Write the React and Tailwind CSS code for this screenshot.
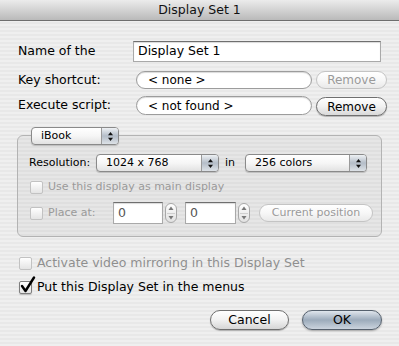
import React from 'react'

const stripes =
  'bg-[repeating-linear-gradient(180deg,#efefef_0px,#efefef_2px,#e8e8e8_2px,#e8e8e8_4px)]'

function Arrows() {
  return (
    <svg width="7" height="11" viewBox="0 0 7 11">
      <path d="M3.5 1 L6 4.2 L1 4.2 Z" fill="#111" />
      <path d="M3.5 10 L6 6.8 L1 6.8 Z" fill="#111" />
    </svg>
  )
}

function Popup({ label, className }) {
  return (
    <div
      className={`flex h-[18px] items-stretch overflow-hidden rounded-[4px] border border-[#8a8a8a] bg-linear-to-b from-white via-[#f6f6f6] to-[#e2e2e2] shadow-[0_1px_1px_rgba(0,0,0,0.18)] ${className}`}
    >
      <div className="flex flex-1 items-center pl-[9px] text-[11px] text-black">{label}</div>
      <div className="flex w-[17px] items-center justify-center border-l border-[#9a9a9a] bg-linear-to-b from-[#eef1f4] via-[#b4bdc8] to-[#dde2e7]">
        <Arrows />
      </div>
    </div>
  )
}

function Stepper() {
  return (
    <div className="flex h-[20px] w-[12px] flex-col items-center justify-between rounded-[6px] border border-[#a8a8a8] bg-linear-to-b from-white via-[#eeeeee] to-[#e2e2e2] py-[2px]">
      <svg width="6" height="5" viewBox="0 0 6 5">
        <path d="M3 0.5 L5.5 4 L0.5 4 Z" fill="#777" />
      </svg>
      <div className="h-px w-[8px] bg-[#cfcfcf]" />
      <svg width="6" height="5" viewBox="0 0 6 5">
        <path d="M3 4.5 L5.5 1 L0.5 1 Z" fill="#777" />
      </svg>
    </div>
  )
}

function Checkbox({ checked, disabled }) {
  return (
    <div className="relative h-[13px] w-[13px] shrink-0">
      <div
        className={`h-[13px] w-[13px] rounded-[2px] border bg-linear-to-b from-white to-[#e4e4e4] ${
          disabled ? 'border-[#c2c2c2]' : 'border-[#7e7e7e] shadow-[0_1px_1px_rgba(0,0,0,0.2)]'
        }`}
      />
      {checked && (
        <svg className="absolute -top-[5px] left-[1px]" width="16" height="18" viewBox="0 0 16 18">
          <path d="M2 10 L5.5 15 L14 1.5" fill="none" stroke="#000" strokeWidth="2.4" strokeLinecap="round" strokeLinejoin="round" />
        </svg>
      )}
    </div>
  )
}

function TextField({ value, className }) {
  return (
    <div
      className={`flex items-center border border-[#a9a9a9] border-t-[#6f6f6f] bg-white pl-[4px] shadow-[inset_0_1px_1px_rgba(0,0,0,0.15)] ${className}`}
    >
      {value}
    </div>
  )
}

export default function App() {
  return (
    <div
      className={`flex h-[346px] w-[399px] flex-col overflow-hidden font-['DejaVu_Sans',sans-serif] text-[12.5px] text-black ${stripes}`}
    >
      {/* Title bar */}
      <div className="flex h-[21px] shrink-0 items-center justify-center border-b border-[#6e6e6e] bg-linear-to-b from-[#ececec] to-[#bababa] text-[12.5px] text-[#111]">
        Display Set 1
      </div>

      {/* Name */}
      <div className="mt-[20px] flex h-[21px] items-center pl-[18px]">
        <div className="w-[115px]">Name of the</div>
        <TextField value="Display Set 1" className="h-[21px] w-[248px]" />
      </div>

      {/* Key shortcut */}
      <div className="mt-[9px] flex h-[18px] items-center pl-[18px]">
        <div className="w-[118px]">Key shortcut:</div>
        <div className="flex h-[18px] w-[176px] items-center rounded-full border border-[#9c9c9c] bg-white pl-[11px] text-[12px] shadow-[inset_0_1px_1px_rgba(0,0,0,0.15)]">
          &lt; none &gt;
        </div>
        <button className="ml-[4px] flex h-[18px] w-[71px] items-center justify-center rounded-full border border-[#c4c4c4] bg-linear-to-b from-white via-[#f7f7f7] to-[#e9e9e9] text-[12px] text-[#9a9a9a]">
          Remove
        </button>
      </div>

      {/* Execute script */}
      <div className="mt-[7px] flex h-[19px] items-center pl-[18px]">
        <div className="w-[118px]">Execute script:</div>
        <div className="flex h-[19px] w-[176px] items-center rounded-full border border-[#9c9c9c] bg-white pl-[11px] text-[12px] shadow-[inset_0_1px_1px_rgba(0,0,0,0.15)]">
          &lt; not found &gt;
        </div>
        <button className="ml-[4px] mt-[2px] flex h-[19px] w-[71px] items-center justify-center rounded-full border border-[#6f6f6f] bg-linear-to-b from-white via-[#f1f1f1] to-[#d9d9d9] text-[12px] shadow-[0_1px_1px_rgba(0,0,0,0.25)]">
          Remove
        </button>
      </div>

      {/* Group box */}
      <div className="relative ml-[17px] mt-[20px] w-[365px]">
        <div className="h-[102px] rounded-[6px] border border-[#b3b3b3] bg-black/[0.035] pl-[11px] pt-[18px]">
          <div className="flex h-[18px] items-center text-[11px]">
            <div className="w-[67px]">Resolution:</div>
            <Popup label="1024 x 768" className="w-[123px]" />
            <div className="w-[26px] pl-[6px]">in</div>
            <Popup label="256 colors" className="w-[122px]" />
          </div>

          <div className="mt-[9px] flex h-[13px] items-center pl-[1px] text-[11px] text-[#9a9a9a]">
            <Checkbox disabled />
            <div className="ml-[5px]">Use this display as main display</div>
          </div>

          <div className="mt-[8px] flex h-[22px] items-center pl-[1px] text-[11px]">
            <Checkbox disabled />
            <div className="ml-[5px] w-[65px] text-[#9a9a9a]">Place at:</div>
            <TextField value="0" className="h-[22px] w-[50px] text-[12.5px] text-[#555]" />
            <div className="ml-[2px]">
              <Stepper />
            </div>
            <TextField value="0" className="ml-[8px] h-[22px] w-[51px] text-[12.5px] text-[#555]" />
            <div className="ml-[2px]">
              <Stepper />
            </div>
            <button className="ml-[9px] flex h-[18px] w-[114px] items-center justify-center rounded-full border border-[#c4c4c4] bg-linear-to-b from-white via-[#f7f7f7] to-[#e9e9e9] text-[11px] text-[#9a9a9a]">
              Current position
            </button>
          </div>
        </div>

        {/* popup sitting on the box's top edge */}
        <div className="absolute -top-[8px] left-[14px]">
          <Popup label="iBook" className="w-[88px]" />
        </div>
      </div>

      {/* Checkboxes */}
      <div className="mt-[18px] flex h-[16px] items-center pl-[19px] text-[#8f8f8f]">
        <Checkbox disabled />
        <div className="ml-[5px]">Activate video mirroring in this Display Set</div>
      </div>
      <div className="mt-[8px] flex h-[16px] items-center pl-[19px]">
        <Checkbox checked />
        <div className="ml-[5px]">Put this Display Set in the menus</div>
      </div>

      {/* Buttons */}
      <div className="mt-[15px] flex justify-end gap-[13px] pr-[17px]">
        <button className="flex h-[20px] w-[79px] items-center justify-center rounded-full border border-[#6f6f6f] bg-linear-to-b from-white via-[#f1f1f1] to-[#d6d6d6] shadow-[0_1px_1px_rgba(0,0,0,0.25)]">
          Cancel
        </button>
        <button className="flex h-[20px] w-[80px] items-center justify-center rounded-full border border-[#55606d] bg-linear-to-b from-[#e0e6ed] via-[#9cabbb] to-[#cbd4de] shadow-[0_1px_2px_rgba(0,0,0,0.3)]">
          OK
        </button>
      </div>
    </div>
  )
}
